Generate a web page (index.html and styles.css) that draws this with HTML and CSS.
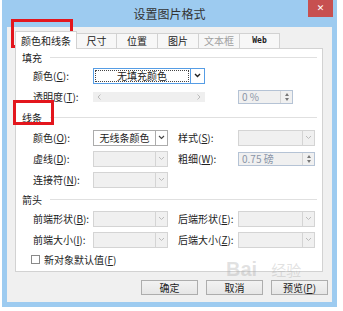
FILE: index.html
```html
<!doctype html>
<html>
<head>
<meta charset="utf-8">
<title>设置图片格式</title>
<link rel="stylesheet" href="styles.css">
</head>
<body>
<div class="win">
  <div class="titlebar">设置图片格式<span class="close">✕</span></div>
  <div class="client">
    <div class="tabs">
      <div class="tab active w62">颜色和线条</div>
      <div class="tab w40">尺寸</div>
      <div class="tab w42">位置</div>
      <div class="tab w42">图片</div>
      <div class="tab w42 off">文本框</div>
      <div class="tab w40 web">Web</div>
    </div>
    <div class="panel">
      <div class="sect first"><span>填充</span><i></i></div>
      <div class="row">
        <span class="lbl">颜色(<u>C</u>):</span>
        <div class="combo focus w112"><span class="ctext"><span class="dots">无填充颜色</span></span><span class="arrow"><svg width="7" height="5" viewBox="0 0 7 5"><path d="M1 1l2.5 2.5L6 1" fill="none" stroke="#222" stroke-width="1.4"/></svg></span></div>
      </div>
      <div class="row">
        <span class="lbl">透明度(<u>T</u>):</span>
        <div class="slider"><svg width="4" height="6" viewBox="0 0 4 6"><path d="M3.5 0.5L1 3l2.5 2.5" fill="none" stroke="#bbb"/></svg><svg width="4" height="6" viewBox="0 0 4 6"><path d="M0.5 0.5L3 3 0.5 5.5" fill="none" stroke="#bbb"/></svg></div>
        <div class="spin w55 sp1"><span class="stext">0 %</span><span class="sbtn"><b class="up"></b><b class="dn"></b></span></div>
      </div>
      <div class="sect mid"><span>线条</span><i></i></div>
      <div class="row">
        <span class="lbl">颜色(<u>O</u>):</span>
        <div class="combo w75"><span class="ctext">无线条颜色</span><span class="arrow"><svg width="7" height="5" viewBox="0 0 7 5"><path d="M1 1l2.5 2.5L6 1" fill="none" stroke="#444" stroke-width="1.1"/></svg></span></div>
        <span class="lbl lbl2">样式(<u>S</u>):</span>
        <div class="combo dis w77"><span class="ctext"></span><span class="arrow"><svg width="7" height="5" viewBox="0 0 7 5"><path d="M1 1l2.5 2.5L6 1" fill="none" stroke="#bbb"/></svg></span></div>
      </div>
      <div class="row">
        <span class="lbl">虚线(<u>D</u>):</span>
        <div class="combo dis w75"><span class="ctext"></span><span class="arrow"><svg width="7" height="5" viewBox="0 0 7 5"><path d="M1 1l2.5 2.5L6 1" fill="none" stroke="#bbb"/></svg></span></div>
        <span class="lbl lbl2">粗细(<u>W</u>):</span>
        <div class="spin w77"><span class="stext">0.75 磅</span><span class="sbtn"><b class="up"></b><b class="dn"></b></span></div>
      </div>
      <div class="row">
        <span class="lbl">连接符(<u>N</u>):</span>
        <div class="combo dis w75"><span class="ctext"></span><span class="arrow"><svg width="7" height="5" viewBox="0 0 7 5"><path d="M1 1l2.5 2.5L6 1" fill="none" stroke="#bbb"/></svg></span></div>
      </div>
      <div class="sect"><span>箭头</span><i></i></div>
      <div class="row">
        <span class="lbl">前端形状(<u>B</u>):</span>
        <div class="combo dis w75"><span class="ctext"></span><span class="arrow"><svg width="7" height="5" viewBox="0 0 7 5"><path d="M1 1l2.5 2.5L6 1" fill="none" stroke="#bbb"/></svg></span></div>
        <span class="lbl lbl2">后端形状(<u>E</u>):</span>
        <div class="combo dis w77"><span class="ctext"></span><span class="arrow"><svg width="7" height="5" viewBox="0 0 7 5"><path d="M1 1l2.5 2.5L6 1" fill="none" stroke="#bbb"/></svg></span></div>
      </div>
      <div class="row">
        <span class="lbl">前端大小(<u>I</u>):</span>
        <div class="combo dis w75"><span class="ctext"></span><span class="arrow"><svg width="7" height="5" viewBox="0 0 7 5"><path d="M1 1l2.5 2.5L6 1" fill="none" stroke="#bbb"/></svg></span></div>
        <span class="lbl lbl2">后端大小(<u>Z</u>):</span>
        <div class="combo dis w77"><span class="ctext"></span><span class="arrow"><svg width="7" height="5" viewBox="0 0 7 5"><path d="M1 1l2.5 2.5L6 1" fill="none" stroke="#bbb"/></svg></span></div>
      </div>
      <div class="row chkrow">
        <span class="chk"></span><span>新对象默认值(<u>F</u>)</span>
      </div>
    </div>
    <div class="buttons">
      <span class="btn">确定</span>
      <span class="btn">取消</span>
      <span class="btn">预览(<u>P</u>)</span>
    </div>
  </div>
</div>
<div class="mark mark1"></div>
<div class="mark mark2"></div>
<div class="wm"><span class="wm-bai">Bai</span><span class="wm-jy">经验</span></div>
</body>
</html>
```
FILE: styles.css
```css
*{ box-sizing:border-box;}
body{ margin:0; background:#fff; font-family:"Noto Sans CJK SC", "Noto Sans", sans-serif; font-size:10px; color:#222; position:relative; width:343px; height:311px; overflow:hidden;}
u{ text-decoration:underline;}

.win{ margin-left:2px; width:335px; height:307px; background:#9dcbf0; padding:0 5px 5px; display:flex; flex-direction:column;}
.titlebar{ height:27px; position:relative; text-align:center; line-height:28px; font-size:12px; color:#333;}
.close{ position:absolute; right:-1px; top:0; width:25px; height:17px; background:#c75050; color:#fff; line-height:17px; font-size:9px; font-weight:bold; font-family:"DejaVu Sans", sans-serif;}

.client{ flex:1; background:#f0f0f0; padding:4px 4px 0 8px; display:flex; flex-direction:column;}
.tabs{ display:flex; align-items:flex-end; height:17px; position:relative; z-index:1;}
.tab{ height:15px; border:1px solid #d2d2d2; border-bottom:none; background:#f7f7f7; text-align:center; line-height:14px; margin-left:-1px; color:#222;}
.tab.active{ height:18px; margin-left:0; margin-bottom:-1px; background:#fff; line-height:17px;}
.tab.off{ color:#a0a0a0;}
.tab.web{ font-family:"DejaVu Sans Mono", monospace; font-size:8px; font-weight:bold;}
.w62{ width:62px;} .w40{ width:41px;} .w42{ width:42px;}

.panel{ height:224px; background:#fff; border:1px solid #d2d2d2; margin-right:5px; padding:0 5px 0 6px;}
.sect{ height:18px; display:flex; align-items:center;}
.sect.first{ height:16px;}
.sect.mid{ height:20px;}
.sect i{ flex:1; border-top:1px solid #e0e0e0; margin-left:8px;}

.row{ height:21px; display:flex; align-items:center; padding-left:11px;}
.lbl{ width:60px; white-space:nowrap;}
.lbl2{ margin-left:10px;}

.combo{ display:flex; height:16px; border:1px solid #acacac; background:#fff;}
.combo .ctext{ flex:1; display:flex; align-items:center; justify-content:center; padding:1px;}
.combo .arrow{ width:12px; border-left:1px solid #acacac; display:flex; align-items:center; justify-content:center; background:#fff;}
.combo.focus{ border-color:#569de5;}
.combo.focus .arrow{ width:14px; border-left-color:#569de5;}
.combo .dots{ flex:1; height:100%; border:1px dotted #444; display:flex; align-items:center; justify-content:center;}
.combo.dis{ background:#f0f0f0; border-color:#d4d4d4;}
.combo.dis .arrow{ background:#f0f0f0; border-left-color:#d4d4d4;}
.w112{ width:112px;} .w75{ width:75px;} .w77{ width:77px;} .w55{ width:55px;}

.slider{ width:112px; height:10px; background:#efefef; display:flex; align-items:center; justify-content:space-between; padding:0 4px;}

.spin{ display:flex; height:14px; border:1px solid #b5c3d5; background:#f0f0f0; color:#8a95a8;}
.sp1{ margin-left:33px;}
.stext{ flex:1; padding-left:3px; line-height:12px; font-family:"DejaVu Sans", "Noto Sans CJK SC", sans-serif; font-size:9px;}
.spin .stext{ font-family:"Noto Sans CJK SC", sans-serif; font-size:10px;}
.sbtn{ width:12px; border-left:1px solid #d4d4d4; display:flex; flex-direction:column; align-items:center; justify-content:center; gap:2px;}
.sbtn b{ width:0; height:0; border-left:2.5px solid transparent; border-right:2.5px solid transparent;}
.sbtn .up{ border-bottom:3px solid #777;}
.sbtn .dn{ border-top:3px solid #777;}

.chkrow{ height:18px; padding-left:9px;}
.chk{ width:9px; height:9px; border:1px solid #8a8a8a; background:#fff; margin-right:4px;}

.buttons{ display:flex; justify-content:flex-end; gap:8px; margin-top:8px;}
.btn{ width:57px; height:15px; border:1px solid #adadad; background:linear-gradient(#f2f2f2,#e6e6e6); text-align:center; line-height:13px;}

.mark{ position:absolute; border:3px solid #e3161d;}
.mark1{ left:11px; top:19px; width:62px; height:29px;}
.mark2{ left:13px; top:100px; width:41px; height:25px;}

.wm{ position:absolute; left:226px; top:258px; color:rgba(170,170,170,0.35); font-family:"Liberation Sans", sans-serif; pointer-events:none;}
.wm-bai{ font-size:20px; font-weight:bold;}
.wm-jy{ font-size:15px; margin-left:14px; font-family:"Noto Sans CJK SC", sans-serif;}
```
